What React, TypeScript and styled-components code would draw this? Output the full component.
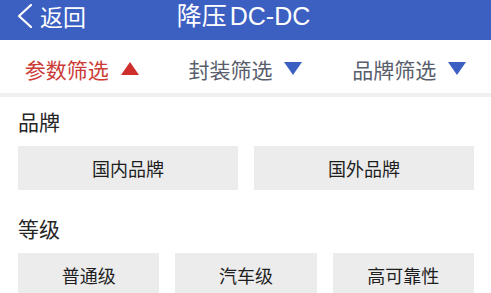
import * as React from 'react'
import styled, { createGlobalStyle } from 'styled-components'

const BLUE = '#3c5fc2'
const RED = '#cf2f2a'
const FONT = `"Noto Sans CJK SC", "Noto Sans", "Liberation Sans", sans-serif`

const GlobalStyle = createGlobalStyle`
  html, body {
    margin: 0;
    padding: 0;
    background: #ffffff;
    font-family: ${FONT};
  }
`

const Page = styled.div`
  width: 491px;
  height: 293px;
  overflow: hidden;
  background: #ffffff;
`

const Header = styled.header`
  display: grid;
  grid-template-columns: 1fr auto 1fr;
  align-items: center;
  height: 40px;
  padding: 0 16px;
  background: ${BLUE};
  color: #ffffff;
`

const BackButton = styled.div`
  display: flex;
  align-items: center;
  gap: 6px;
  font-size: 23px;
  line-height: 30px;
  margin-top: -9px;
`

const Title = styled.div`
  display: flex;
  gap: 3px;
  font-size: 25px;
  line-height: 30px;
  margin-top: -9px;
  margin-left: -4px;
  font-family: "Liberation Sans", "Noto Sans CJK SC", sans-serif;
`

const FilterBar = styled.nav`
  display: grid;
  grid-template-columns: repeat(3, 1fr);
  height: 57px;
  padding-top: 4px;
  box-sizing: border-box;
  align-items: center;
  border-bottom: 4px solid #f0f0f0;
`

const FilterItem = styled.div<{ active?: boolean }>`
  display: flex;
  align-items: center;
  justify-content: center;
  gap: 12px;
  font-size: 21px;
  line-height: 28px;
  color: ${props => (props.active ? '#cc3b36' : '#585e6c')};
`

const Content = styled.main`
  display: flex;
  flex-direction: column;
  gap: 26px;
  padding: 12px 17px 0 18px;
`

const Section = styled.section`
  display: flex;
  flex-direction: column;
  gap: 13px;
`

const SectionLabel = styled.div`
  font-size: 21px;
  line-height: 24px;
  color: #262626;
`

const OptionGrid = styled.div<{ cols: number }>`
  display: grid;
  grid-template-columns: repeat(${props => props.cols}, 1fr);
  gap: 16px;
`

const Option = styled.div`
  height: 44px;
  display: flex;
  align-items: center;
  justify-content: center;
  background: #ececec;
  font-size: 18px;
  color: #1e1e1e;
`

const Chevron = () => (
  <svg width="18" height="24" viewBox="0 0 18 24">
    <path d="M15 1 L3 12 L15 23" fill="none" stroke="#ffffff" strokeWidth="2.2" strokeLinecap="round" strokeLinejoin="round" />
  </svg>
)

const Triangle = ({ up, color }: { up?: boolean; color: string }) => (
  <svg width="18" height="13" viewBox="0 0 18 13">
    <polygon points={up ? '9,0 18,13 0,13' : '0,0 18,0 9,13'} fill={color} />
  </svg>
)

const filters = [
  { label: '参数筛选', active: true },
  { label: '封装筛选', active: false },
  { label: '品牌筛选', active: false },
]

const sections = [
  { label: '品牌', options: ['国内品牌', '国外品牌'] },
  { label: '等级', options: ['普通级', '汽车级', '高可靠性'] },
]

export default function App() {
  return (
    <Page>
      <GlobalStyle />
      <Header>
        <BackButton>
          <Chevron />
          <span>返回</span>
        </BackButton>
        <Title>
          <span>降压</span>
          <span>DC-DC</span>
        </Title>
        <span />
      </Header>
      <FilterBar>
        {filters.map(f => (
          <FilterItem key={f.label} active={f.active}>
            <span>{f.label}</span>
            <Triangle up={f.active} color={f.active ? RED : BLUE} />
          </FilterItem>
        ))}
      </FilterBar>
      <Content>
        {sections.map(s => (
          <Section key={s.label}>
            <SectionLabel>{s.label}</SectionLabel>
            <OptionGrid cols={s.options.length}>
              {s.options.map(o => (
                <Option key={o}>{o}</Option>
              ))}
            </OptionGrid>
          </Section>
        ))}
      </Content>
    </Page>
  )
}
